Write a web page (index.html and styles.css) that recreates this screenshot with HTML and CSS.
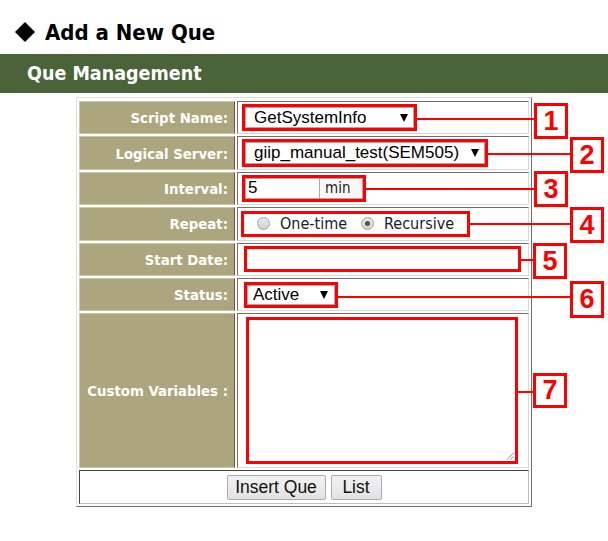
FILE: index.html
```html
<!DOCTYPE html>
<html>
<head>
<meta charset="utf-8">
<title>Add a New Que</title>
<link rel="stylesheet" href="styles.css">
</head>
<body>
<div class="page">
  <h1 class="title"><svg class="diamond" width="20" height="20" viewBox="0 0 20 20"><polygon points="10,0 20,10 10,20 0,10"/></svg><span>Add a New Que</span></h1>
  <div class="bar">Que Management</div>
  <table class="form">
    <tr class="r-std r1">
      <td class="label">Script Name:</td>
      <td class="value"><span class="mark m1"><span class="sel s1"><span class="sel-text">GetSystemInfo</span><span class="arrow"></span></span></span></td>
    </tr>
    <tr class="r-std r2">
      <td class="label">Logical Server:</td>
      <td class="value"><span class="mark m2"><span class="sel s2"><span class="sel-text">giip_manual_test(SEM505)</span><span class="arrow"></span></span></span></td>
    </tr>
    <tr class="r-std r3">
      <td class="label">Interval:</td>
      <td class="value"><span class="mark m3"><span class="group"><span class="inp">5</span><span class="addon">min</span></span></span></td>
    </tr>
    <tr class="r-std r4">
      <td class="label">Repeat:</td>
      <td class="value"><span class="mark m4"><span class="radio"></span><span class="rlabel">One-time</span><span class="radio checked"></span><span class="rlabel">Recursive</span></span></td>
    </tr>
    <tr class="r-std r5">
      <td class="label">Start Date:</td>
      <td class="value"><span class="mark m5"></span></td>
    </tr>
    <tr class="r-std r6">
      <td class="label">Status:</td>
      <td class="value"><span class="mark m6"><span class="sel s6"><span class="sel-text">Active</span><span class="arrow"></span></span></span></td>
    </tr>
    <tr class="r-big">
      <td class="label">Custom Variables :</td>
      <td class="value"><span class="mark m7"><svg class="grip" width="8" height="8" viewBox="0 0 8 8"><line x1="7.5" y1="1" x2="1" y2="7.5"/><line x1="7.5" y1="4.5" x2="4.5" y2="7.5"/></svg></span></td>
    </tr>
    <tr class="r-btn">
      <td class="buttons" colspan="2"><span class="btn b-insert">Insert Que</span><span class="btn b-list">List</span></td>
    </tr>
  </table>

  <span class="line l1"></span><span class="num n1">1</span>
  <span class="line l2"></span><span class="num n2">2</span>
  <span class="line l3"></span><span class="num n3">3</span>
  <span class="line l4"></span><span class="num n4">4</span>
  <span class="line l5"></span><span class="num n5">5</span>
  <span class="line l6"></span><span class="num n6">6</span>
  <span class="line l7"></span><span class="num n7">7</span>
</div>
</body>
</html>
```

FILE: styles.css
```css
* { box-sizing: border-box; }
html, body { margin: 0; padding: 0; background: #fff; }
body { font-family: "DejaVu Sans Condensed", "DejaVu Sans", sans-serif; }
.page { position: relative; width: 608px; height: 541px; }

.title {
  margin: 0;
  height: 54px;
  display: flex;
  align-items: center;
  padding-left: 15px;
  padding-top: 10px;
  font-size: 22px;
  font-weight: bold;
  color: #000;
}
.diamond { margin-right: 10px; }
.diamond polygon { fill: #000; }

.bar {
  height: 39px;
  background: #4b6339;
  color: #fff;
  font-size: 19.5px;
  font-weight: bold;
  padding-left: 27px;
  display: flex;
  align-items: center;
}

.form {
  margin: 4px auto 0;
  width: 456px;
  border: 1px solid;
  border-color: #e0e0e0 #6f6f6f #6f6f6f #e0e0e0;
  border-spacing: 2px;
  padding-top: 1px;
}
.form td {
  border: 1px solid;
  border-color: #6f6f6f #d8d8d8 #d8d8d8 #6f6f6f;
  padding: 0;
}
.r-std td { height: 33.4px; }
.r-big td { height: 155px; }
.r-btn td { height: 34px; }

.label {
  width: 156px;
  background: #aba67e;
  color: #fff;
  font-weight: bold;
  font-size: 14.8px;
  text-align: right;
  padding-right: 6px !important;
  border-right-color: #8b4a3a !important;
  border-top-color: #c9c6ad !important;
  border-left-color: #c9c6ad !important;
  border-bottom-color: #c9c6ad !important;
}
.value {
  padding-left: 4px !important;
  vertical-align: middle;
}

.mark {
  display: inline-flex;
  align-items: center;
  border: 3px solid #ff0000;
  vertical-align: middle;
  background: #fff;
}
.m1 { width: 175px; height: 27px; }
.m2 { width: 246px; height: 28px; }
.m3 { width: 124px; height: 27px; }
.m4 { width: 229px; height: 26px; margin-left: -1px; }
.m5 { width: 277px; height: 26px; margin-left: 2px; }
.m6 { width: 94px; height: 26px; margin-left: 2px; }
.m7 { width: 272px; height: 147px; margin-left: 4px; position: relative; }

.sel {
  display: flex;
  align-items: center;
  justify-content: space-between;
  height: 100%;
  width: 100%;
  border: 1px solid #a9a9a9;
  padding: 0 5px 0 8px;
  font-family: "Liberation Sans", Arial, sans-serif;
  font-size: 17px;
  color: #000;
}
.s6 { padding-left: 5px; padding-right: 6px; }
.arrow {
  width: 0;
  height: 0;
  border-left: 4px solid transparent;
  border-right: 4px solid transparent;
  border-top: 8px solid #000;
}

.group {
  display: flex;
  height: 100%;
  width: 100%;
  border: 1px solid #a9a9a9;
}
.inp {
  width: 73px;
  font-family: "Liberation Sans", Arial, sans-serif;
  font-size: 17px;
  padding-left: 2px;
  display: flex;
  align-items: center;
}
.addon {
  flex: 1;
  border-left: 1px solid #a9a9a9;
  background: #f7f7f7;
  font-size: 15px;
  color: #222;
  display: flex;
  align-items: center;
  padding-left: 5px;
}

.radio {
  width: 13px;
  height: 13px;
  border-radius: 50%;
  border: 1px solid #a3a3a3;
  background: linear-gradient(#e8e8e8, #d2d2d2);
  margin-left: 13px;
  margin-right: 10px;
  display: inline-flex;
  align-items: center;
  justify-content: center;
}
.radio.checked::after {
  content: "";
  width: 5px;
  height: 5px;
  border-radius: 50%;
  background: #555;
}
.rlabel {
  font-size: 16px;
  color: #1a1a2a;
}
.rlabel + .radio { margin-left: 14px; }

.grip {
  position: absolute;
  right: 1px;
  bottom: 1px;
}
.grip line { stroke: #888; stroke-width: 1; }

.buttons {
  text-align: center;
  vertical-align: middle;
  border-color: #444 #bdbdbd #bdbdbd #444 !important;
}
.btn {
  display: inline-flex;
  align-items: center;
  justify-content: center;
  height: 25px;
  border: 1px solid #adadad;
  border-radius: 2px;
  background: linear-gradient(#f2f2f2, #e2e2e2);
  font-family: "Liberation Sans", Arial, sans-serif;
  font-size: 17.5px;
  color: #111;
  vertical-align: middle;
}
.b-insert { width: 99px; margin-right: 5px; }
.b-list { width: 51px; }

.line {
  position: absolute;
  height: 2px;
  background: #ff0000;
}
.num {
  position: absolute;
  width: 34px;
  height: 36px;
  border: 3px solid #ff0000;
  background: #fff;
  color: #ff0000;
  font-family: "Liberation Sans", Arial, sans-serif;
  font-weight: bold;
  font-size: 27px;
  display: flex;
  align-items: center;
  justify-content: center;
}
.l1 { top: 118px; left: 416px; width: 118px; }
.n1 { top: 103px; left: 534px; }
.l2 { top: 153px; left: 487px; width: 83px; }
.n2 { top: 137px; left: 570px; }
.l3 { top: 188px; left: 365px; width: 169px; }
.n3 { top: 171px; left: 534px; }
.l4 { top: 223px; left: 469px; width: 101px; }
.n4 { top: 207px; left: 570px; }
.l5 { top: 259px; left: 520px; width: 13px; }
.n5 { top: 243px; left: 533px; }
.l6 { top: 296px; left: 337px; width: 233px; }
.n6 { top: 281px; left: 570px; height: 37px; }
.l7 { top: 391px; left: 517px; width: 16px; }
.n7 { top: 373px; left: 533px; height: 35px; }
```
